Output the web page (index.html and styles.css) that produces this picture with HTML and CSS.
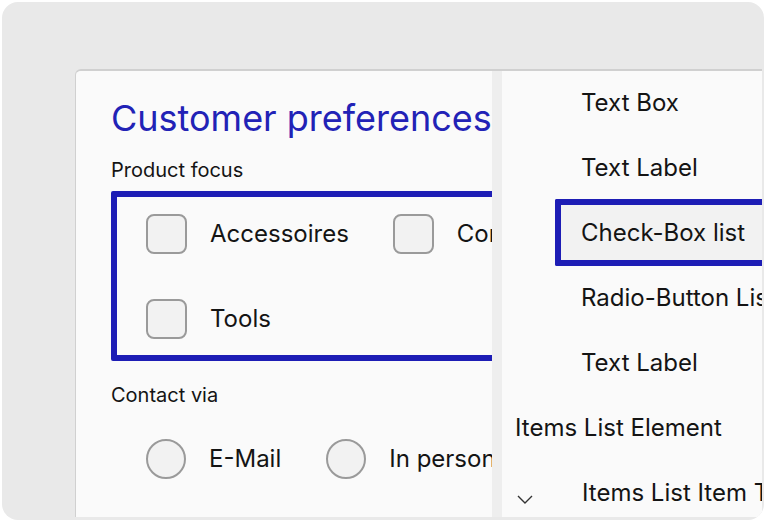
FILE: index.html
```html
<!DOCTYPE html>
<html lang="en">
<head>
    <meta charset="UTF-8">
    <meta name="viewport" content="width=device-width, initial-scale=1.0">
    <title>Customer preferences</title>
    <link rel="stylesheet" href="styles.css">
</head>
<body>
    <div class="screen">
        <div class="frame">
            <div class="form">
                <h1 class="title">Customer preferences</h1>

                <div class="label">Product focus</div>
                <div class="group selected">
                    <div class="option"><span class="check"></span><span>Accessoires</span></div>
                    <div class="option"><span class="check"></span><span>Components</span></div>
                    <div class="option"><span class="check"></span><span>Tools</span></div>
                </div>

                <div class="label">Contact via</div>
                <div class="group radios">
                    <div class="option"><span class="radio"></span><span>E-Mail</span></div>
                    <div class="option"><span class="radio"></span><span>In person</span></div>
                </div>
            </div>

            <div class="split"></div>

            <div class="tree">
                <ul>
                    <li class="sub">Text Box</li>
                    <li class="sub">Text Label</li>
                    <li class="sub active">Check-Box list</li>
                    <li class="sub">Radio-Button List</li>
                    <li class="sub">Text Label</li>
                    <li class="top">Items List Element</li>
                    <li class="top">
                        <svg class="chevron" width="16" height="9" viewBox="0 0 16 9"><polyline points="1,1 8,8 15,1" fill="none" stroke="#333" stroke-width="1.4"/></svg>
                        <span>Items List Item Template</span>
                    </li>
                </ul>
            </div>
        </div>
    </div>
</body>
</html>
```

FILE: styles.css
```css
*{
    padding: 0;
    margin: 0;
    box-sizing: border-box;
}
ul{
    list-style: none;
}
body{
    background-color: #fff;
    font-family: Inter, "Noto Sans", sans-serif;
    color: #141414;
}
.screen{
    width: 762px;
    height: 518px;
    margin: 2px;
    padding: 67px 2px 3px 73px;
    background-color: #e9e9e9;
    border-radius: 16px;
    overflow: hidden;
}
.frame{
    height: 100%;
    display: flex;
    border-top: 2px solid #d0d0d0;
    border-left: 1px solid #d0d0d0;
    border-top-left-radius: 6px;
    overflow: hidden;
}

/* left: the form preview */
.form{
    width: 416px;
    flex-shrink: 0;
    background-color: #fafafa;
    padding: 29px 0 0 35px;
    overflow: hidden;
    white-space: nowrap;
}
.title{
    font-size: 36px;
    font-weight: 400;
    line-height: 1;
    color: #2222b6;
}
.label{
    font-size: 20px;
    line-height: 1;
    margin-top: 24px;
}
.group{
    display: flex;
    flex-wrap: wrap;
    column-gap: 44px;
    row-gap: 45px;
    font-size: 24px;
    line-height: 1;
}
.group.selected{
    width: 600px;
    margin-top: 11px;
    padding: 17px 29px 16px;
    border: 6px solid #1d1db5;
    border-radius: 2px;
}
.group.radios{
    width: 600px;
    flex-wrap: nowrap;
    column-gap: 45px;
    margin-top: 34px;
    padding-left: 35px;
}
.option{
    display: flex;
    align-items: center;
    gap: 23px;
}
.check,
.radio{
    width: 41px;
    height: 40px;
    flex-shrink: 0;
    background-color: #f2f2f2;
    border: 2px solid #9a9a9a;
    border-radius: 8px;
}
.radio{
    width: 40px;
    border-radius: 50%;
}

.split{
    width: 10px;
    flex-shrink: 0;
    background-color: #eeeeee;
}

/* right: the element tree */
.tree{
    flex: 1;
    background-color: #fafafa;
    overflow: hidden;
    white-space: nowrap;
}
.tree ul{
    margin-top: -1px;
}
.tree li{
    height: 65px;
    display: flex;
    align-items: center;
    font-size: 24px;
    line-height: 1;
}
.tree li.sub{
    padding-left: 79px;
}
.tree li.top{
    padding-left: 13px;
}
.tree li.active{
    height: 67px;
    margin: -1px 0 -1px 53px;
    padding-left: 20px;
    border: 6px solid #1d1db5;
    border-right: none;
    border-radius: 2px 0 0 2px;
    background-color: #f2f2f2;
}
.chevron{
    flex-shrink: 0;
    margin: 13px 49px 0 2px;
}
```
